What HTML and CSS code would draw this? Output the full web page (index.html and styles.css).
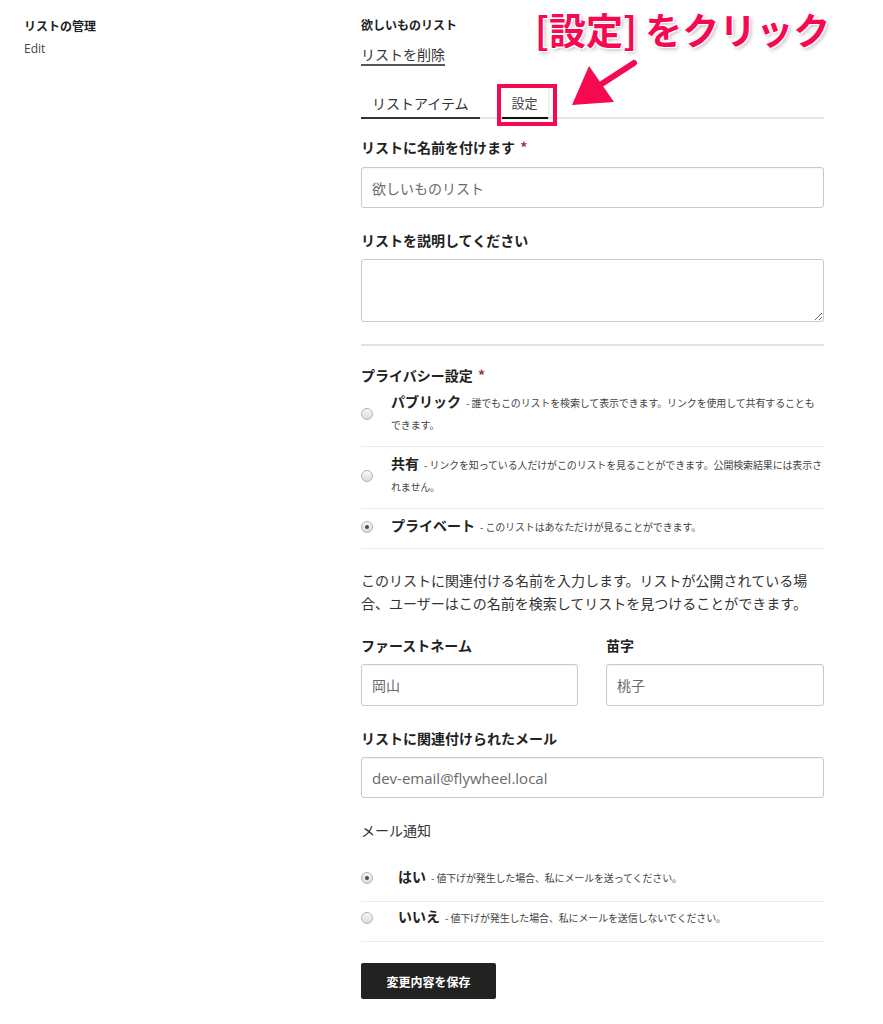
FILE: index.html
```html
<!DOCTYPE html>
<html lang="ja">
<head>
<meta charset="utf-8">
<title>リストの管理</title>
<link rel="stylesheet" href="styles.css">
</head>
<body>
<div class="page">
  <aside class="side">
    <h2 class="side-title">リストの管理</h2>
    <a class="side-link" href="#">Edit</a>
  </aside>
  <main class="main">
    <h1 class="list-title">欲しいものリスト</h1>
    <div class="delete-row"><a class="delete-link" href="#">リストを削除</a></div>
    <nav class="tabs">
      <span class="tab">リストアイテム</span>
      <span class="tab tab-active">設定</span>
      <span class="callout-box"></span>
    </nav>
    <form class="form">
      <label class="field-label label-first">リストに名前を付けます <span class="req">*</span></label>
      <input class="text-input" type="text" value="欲しいものリスト">
      <label class="field-label label-gap">リストを説明してください</label>
      <textarea class="text-area"></textarea>
      <hr class="divider">
      <div class="field-label privacy-label">プライバシー設定 <span class="req">*</span></div>
      <div class="option">
        <span class="radio-col"><span class="radio"></span></span>
        <span class="option-text"><b class="option-title">パブリック</b>- 誰でもこのリストを検索して表示できます。リンクを使用して共有することも<span class="nowrap">できます。</span></span>
      </div>
      <div class="option">
        <span class="radio-col"><span class="radio"></span></span>
        <span class="option-text"><b class="option-title">共有</b>- リンクを知っている人だけがこのリストを見ることができます。公開検索結果には表示されません。</span>
      </div>
      <div class="option">
        <span class="radio-col"><span class="radio radio-checked"></span></span>
        <span class="option-text"><b class="option-title">プライベート</b>- このリストはあなただけが見ることができます。</span>
      </div>
      <p class="intro">このリストに関連付ける名前を入力します。リストが公開されている場合、ユーザーはこの名前を検索してリストを見つけることができます。</p>
      <div class="name-grid">
        <div class="name-field">
          <label class="field-label">ファーストネーム</label>
          <input class="text-input name-input" type="text" value="岡山">
        </div>
        <div class="name-field">
          <label class="field-label">苗字</label>
          <input class="text-input name-input" type="text" value="桃子">
        </div>
      </div>
      <label class="field-label label-gap">リストに関連付けられたメール</label>
      <input class="text-input email-input" type="text" value="dev-email@flywheel.local">
      <div class="notify-label">メール通知</div>
      <div class="mail-options">
        <div class="option option-mail">
          <span class="radio-col radio-col-wide"><span class="radio radio-checked"></span></span>
          <span class="option-text"><b class="option-title">はい</b>- 値下げが発生した場合、私にメールを送ってください。</span>
        </div>
        <div class="option option-mail">
          <span class="radio-col radio-col-wide"><span class="radio"></span></span>
          <span class="option-text"><b class="option-title">いいえ</b>- 値下げが発生した場合、私にメールを送信しないでください。</span>
        </div>
      </div>
      <button class="save-btn" type="button">変更内容を保存</button>
    </form>
  </main>
  <div class="callout-text">[設定] をクリック</div>
  <svg class="callout-arrow" viewBox="560 55 85 60" width="85" height="60" aria-hidden="true">
    <line x1="600" y1="85" x2="634" y2="63" stroke="#f50a52" stroke-width="6" stroke-linecap="round"/>
    <polygon points="572,105 589,66 614,102" fill="#f50a52"/>
  </svg>
</div>
</body>
</html>
```

FILE: styles.css
```css
body {
  margin: 0;
  background: #fff;
  color: #222;
  font-family: "Noto Sans CJK JP", sans-serif;
}

.page {
  position: relative;
  display: flex;
  padding-top: 16px;
  min-height: 1024px;
  box-sizing: border-box;
}

.side {
  width: 361px;
  flex: none;
  padding-left: 24px;
  padding-top: 1px;
  box-sizing: border-box;
}

.side-title {
  margin: 0;
  font-size: 12px;
  font-weight: 700;
  line-height: 18px;
  color: #222;
}

.side-link {
  display: block;
  margin-top: 5px;
  font-family: "Open Sans", sans-serif;
  font-size: 12px;
  line-height: 18px;
  color: #444;
  text-decoration: none;
}

.main {
  width: 463px;
  flex: none;
}

.list-title {
  margin: 0;
  font-size: 12px;
  font-weight: 700;
  line-height: 18px;
  color: #222;
}

.delete-row {
  display: flex;
  margin-top: 10px;
}

.delete-link {
  display: block;
  font-size: 14px;
  line-height: 20px;
  color: #333;
  text-decoration: none;
  border-bottom: 2px solid #555;
}

.tabs {
  position: relative;
  display: flex;
  gap: 22px;
  margin-top: 18px;
  border-bottom: 2px solid #e6e6e6;
}

.tab {
  padding: 9px 11px 4px;
  font-size: 14px;
  line-height: 20px;
  color: #333;
  border-bottom: 2px solid #333;
  margin-bottom: -2px;
}

.tab-active {
  padding: 9px 10px 4px;
  font-size: 13px;
  color: #444;
  background: #fff;
  border-bottom-color: #111;
  box-shadow: 1px 0 2px rgba(0, 0, 0, 0.12);
}

.callout-box {
  position: absolute;
  left: 136px;
  top: 0;
  width: 60px;
  height: 42px;
  box-sizing: border-box;
  border: 4px solid #f50a52;
}

.form {
  margin: 0;
}

.field-label {
  display: block;
  margin: 0;
  font-size: 14px;
  font-weight: 700;
  line-height: 20px;
  color: #222;
}

.label-first {
  margin-top: 18px;
}

.label-gap {
  margin-top: 22px;
}

.req {
  color: #a8302c;
  margin-left: 2px;
}

.text-input {
  display: block;
  width: 100%;
  height: 41px;
  margin-top: 10px;
  padding: 0 10px;
  box-sizing: border-box;
  border: 1px solid #c9c9c9;
  border-radius: 3px;
  box-shadow: inset 0 1px 1px rgba(0, 0, 0, 0.04);
  font-family: "Noto Sans CJK JP", sans-serif;
  font-size: 14px;
  color: #6a6a6a;
  background: #fff;
  outline: none;
}

.email-input {
  font-family: "Open Sans", "Noto Sans CJK JP", sans-serif;
  font-size: 15px;
  margin-top: 9px;
}

.text-area {
  display: block;
  width: 100%;
  height: 63px;
  margin-top: 9px;
  box-sizing: border-box;
  border: 1px solid #c9c9c9;
  border-radius: 3px;
  resize: vertical;
  font-family: "Noto Sans CJK JP", sans-serif;
  background: #fff;
}

.divider {
  margin: 22px 0 0;
  border: 0;
  border-top: 2px solid #e2e2e2;
}

.privacy-label {
  margin-top: 19px;
}

.option {
  display: flex;
  align-items: center;
  padding: 7px 0 10px;
  border-bottom: 1px solid #ebebeb;
}

.radio-col {
  width: 30px;
  flex: none;
  display: flex;
  align-items: center;
}

.radio-col-wide {
  width: 37px;
}

.radio {
  position: relative;
  width: 12px;
  height: 12px;
  box-sizing: border-box;
  border-radius: 50%;
  border: 1px solid #b3b3b3;
  background: linear-gradient(#f7f7f7, #dcdcdc);
}

.radio-checked::after {
  content: "";
  position: absolute;
  left: 3px;
  top: 3px;
  width: 4px;
  height: 4px;
  border-radius: 50%;
  background: #4a4a4a;
}

.option-text {
  flex: 1;
  font-size: 10px;
  line-height: 22px;
  color: #444;
  letter-spacing: -0.15px;
}

.option-title {
  display: inline-block;
  margin-right: 5px;
  font-size: 14px;
  font-weight: 700;
  line-height: 16px;
  color: #222;
  letter-spacing: 0;
}

.nowrap {
  white-space: nowrap;
}

.intro {
  margin: 20px 0 0;
  max-width: 455px;
  font-size: 14px;
  line-height: 23px;
  color: #333;
}

.name-grid {
  display: grid;
  grid-template-columns: 217px 218px;
  column-gap: 28px;
  margin-top: 20px;
}

.name-input {
  height: 42px;
  margin-top: 9px;
}

.notify-label {
  margin-top: 22px;
  font-size: 14px;
  line-height: 20px;
  color: #333;
}

.mail-options {
  margin-top: 22px;
}

.option-mail {
  padding: 5px 0 12px;
}

.save-btn {
  display: block;
  width: 135px;
  height: 36px;
  margin-top: 21px;
  border: 0;
  border-radius: 2px;
  background: #222;
  color: #fff;
  font-family: "Noto Sans CJK JP", sans-serif;
  font-size: 12px;
  font-weight: 700;
}

.callout-text {
  position: absolute;
  left: 535px;
  top: 9px;
  font-family: "Noto Sans CJK JP", sans-serif;
  font-size: 37px;
  font-weight: 700;
  line-height: 40px;
  color: #f50a52;
  white-space: nowrap;
  text-shadow: 1px 1px 0 #fff, -1px -1px 0 #fff, 1px -1px 0 #fff, -1px 1px 0 #fff,
    0 0 3px #fff, 2px 2px 4px rgba(0, 0, 0, 0.3);
}

.callout-arrow {
  position: absolute;
  left: 560px;
  top: 55px;
}
```
